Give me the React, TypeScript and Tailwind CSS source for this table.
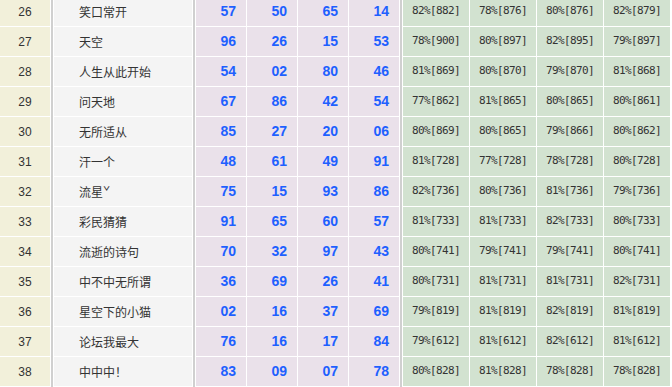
import React from 'react';

type Row = {
  no: number;
  name: string;
  nums: string[];
  rates: string[];
};

const rows: Row[] = [
  { no: 26, name: '笑口常开', nums: ['57', '50', '65', '14'], rates: ['82%[882]', '78%[876]', '80%[876]', '82%[879]'] },
  { no: 27, name: '天空', nums: ['96', '26', '15', '53'], rates: ['78%[900]', '80%[897]', '82%[895]', '79%[897]'] },
  { no: 28, name: '人生从此开始', nums: ['54', '02', '80', '46'], rates: ['81%[869]', '80%[870]', '79%[870]', '81%[868]'] },
  { no: 29, name: '问天地', nums: ['67', '86', '42', '54'], rates: ['77%[862]', '81%[865]', '80%[865]', '80%[861]'] },
  { no: 30, name: '无所适从', nums: ['85', '27', '20', '06'], rates: ['80%[869]', '80%[865]', '79%[866]', '80%[862]'] },
  { no: 31, name: '汗一个', nums: ['48', '61', '49', '91'], rates: ['81%[728]', '77%[728]', '78%[728]', '80%[728]'] },
  { no: 32, name: '流星ˇ', nums: ['75', '15', '93', '86'], rates: ['82%[736]', '80%[736]', '81%[736]', '79%[736]'] },
  { no: 33, name: '彩民猜猜', nums: ['91', '65', '60', '57'], rates: ['81%[733]', '81%[733]', '82%[733]', '80%[733]'] },
  { no: 34, name: '流逝的诗句', nums: ['70', '32', '97', '43'], rates: ['80%[741]', '79%[741]', '79%[741]', '80%[741]'] },
  { no: 35, name: '中不中无所谓', nums: ['36', '69', '26', '41'], rates: ['80%[731]', '81%[731]', '81%[731]', '82%[731]'] },
  { no: 36, name: '星空下的小猫', nums: ['02', '16', '37', '69'], rates: ['79%[819]', '81%[819]', '82%[819]', '81%[819]'] },
  { no: 37, name: '论坛我最大', nums: ['76', '16', '17', '84'], rates: ['79%[612]', '81%[612]', '82%[612]', '81%[612]'] },
  { no: 38, name: '中中中！', nums: ['83', '09', '07', '78'], rates: ['80%[828]', '81%[828]', '78%[828]', '78%[828]'] },
];

// gray group divider: 2px gray + 1px white gap after it
const Divider = () => <div className="w-[3px] shrink-0 bg-[#d0d0d0] border-r border-white" />;

export default function App() {
  return (
    <div className="w-[672px] h-[387px] overflow-hidden bg-white text-[#333]" style={{ fontFamily: '"Liberation Sans", "Noto Sans CJK SC", sans-serif' }}>
      <div className="-mt-[3px]">
        {rows.map((r) => (
          <div key={r.no} className="flex h-[30px]">
            <div className="w-[51px] shrink-0 bg-[#f2f0da] border-r border-b border-white flex items-center justify-center text-[12px]">
              {r.no}
            </div>
            <Divider />
            <div
              className="w-[139px] shrink-0 bg-[#f4f4f4] border-r border-b border-white flex items-center pl-[25px] text-[12px]"
              style={{ fontFamily: '"Noto Sans CJK SC", "Liberation Sans", sans-serif' }}
            >
              {r.name}
            </div>
            <Divider />
            {r.nums.map((n, i) => (
              <div
                key={i}
                className="w-[51px] shrink-0 bg-[#eae1ea] border-r border-b border-white flex items-center justify-end pr-[10px] text-[14px] font-bold text-[#1e60ff]"
              >
                {n}
              </div>
            ))}
            <Divider />
            {r.rates.map((t, i) => (
              <div
                key={i}
                className="w-[67px] shrink-0 bg-[#d2e2d0] border-r border-b border-white flex items-center justify-center text-[11px] tracking-[-0.6px]"
                style={{ fontFamily: '"DejaVu Sans Mono", monospace' }}
              >
                {t}
              </div>
            ))}
          </div>
        ))}
      </div>
    </div>
  );
}
